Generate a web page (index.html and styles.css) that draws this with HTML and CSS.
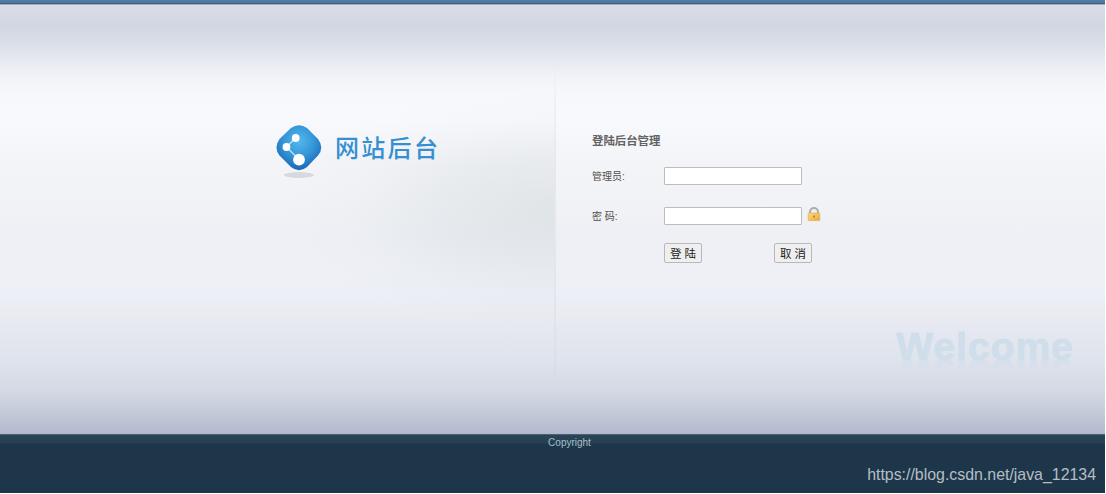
FILE: index.html
```html
<!DOCTYPE html>
<html lang="zh-CN">
<head>
    <meta charset="utf-8">
    <title>网站后台</title>
    <link rel="stylesheet" href="styles.css">
</head>
<body>
    <div class="top-bar"></div>

    <div class="main">
        <div class="left">
            <div class="logo">
                <svg class="logo-icon" width="48" height="56" viewBox="0 0 48 56">
                    <defs>
                        <radialGradient id="blue" cx="50%" cy="35%" r="62%">
                            <stop offset="0" stop-color="#55b8ec"/>
                            <stop offset="0.55" stop-color="#3596d8"/>
                            <stop offset="1" stop-color="#1c6cb8"/>
                        </radialGradient>
                    </defs>
                    <ellipse class="logo-shadow" cx="24" cy="51" rx="15" ry="3"/>
                    <path d="M16 4 Q24 -1.500 32 4 L43 15 Q49.500 23.500 43 31.500 L32 43 Q24 49.500 16 43 L4.500 31.500 Q-1.500 23.500 4.500 15 Z" fill="url(#blue)"/>
                    <path d="M20.500 14 L11.500 23 L24 35.500" fill="none" stroke="#b9dff5" stroke-width="1.500"/>
                    <circle cx="20.700" cy="14" r="3.900" fill="#fff"/>
                    <circle cx="11.500" cy="23" r="3.900" fill="#fff"/>
                    <circle cx="24" cy="35.700" r="5.900" fill="#fff"/>
                </svg>
                <span class="logo-text">网站后台</span>
            </div>
        </div>
        <div class="divider"></div>
        <div class="right">
            <form class="login">
                <h2>登陆后台管理</h2>
                <div class="row">
                    <label for="username">管理员:</label>
                    <input type="text" id="username">
                </div>
                <div class="row">
                    <label for="password">密 码:</label>
                    <input type="password" id="password">
                    <svg class="lock" width="14" height="16" viewBox="0 0 14 16">
                        <defs>
                            <linearGradient id="gold" x1="0" y1="0" x2="1" y2="1">
                                <stop offset="0" stop-color="#fbdc84"/>
                                <stop offset="1" stop-color="#e9a83b"/>
                            </linearGradient>
                        </defs>
                        <path d="M3 8 V6 A4 4 0 0 1 11 6 V8" fill="none" stroke="#a9abad" stroke-width="2"/>
                        <rect x="1.200" y="7" width="11.600" height="7.600" rx="0.800" fill="url(#gold)" stroke="#e3ad51" stroke-width="0.700"/>
                        <rect x="6.300" y="9.500" width="1.400" height="2" fill="#a77421"/>
                    </svg>
                </div>
                <div class="buttons">
                    <button type="button">登 陆</button>
                    <button type="reset">取 消</button>
                </div>
            </form>
            <div class="welcome">Welcome</div>
        </div>
    </div>

    <div class="footer">
        <div class="copyright">Copyright</div>
        <div class="link">https://blog.csdn.net/java_12134</div>
    </div>
</body>
</html>
```

FILE: styles.css
```css
* { box-sizing: border-box; }
html { background: #fff; }
body { margin: 0; width: 1105px; height: 493px; display: flex; flex-direction: column; overflow: hidden; font-family: "Liberation Sans", "Noto Sans CJK SC", sans-serif; background: #1e364a; }

.top-bar { height: 5px; flex: none; background: linear-gradient(#557da3 0, #50769b 3px, #3b5f7e 3px, #3b5f7e 4px, #a0aec0 4px); }

.main {
    height: 429px;
    flex: none;
    display: flex;
    background: linear-gradient(#d9dde7 0, #d2d6e2 20px, #dadee8 38px, #e6e9f0 55px, #f2f4f8 74px, #f7f8fc 90px, #f8f9fd 115px, #f3f4f7 160px, #f2f3f6 190px, #eef0f5 230px, #eef0f5 270px, #ebeff8 290px, #ebecf2 305px, #e5e8f1 325px, #dfe3ec 355px, #d5d9e5 385px, #c3cad7 408px, #b2b9cd 429px);
}
.left {
    width: 554px;
    padding: 119px 0 0 275px;
    background: radial-gradient(ellipse 270px 120px at 554px 205px, rgba(196, 206, 209, 0.38), rgba(205, 213, 216, 0.26) 45%, rgba(215, 222, 226, 0.1) 75%, rgba(220, 226, 230, 0) 100%);
}
.logo { display: flex; }
.logo-icon { display: block; }
.logo-shadow { fill: #d7d9de; }
.logo-text { margin: 5px 0 0 12px; font-family: "Noto Sans CJK SC", sans-serif; font-size: 24px; font-weight: 500; line-height: 36px; letter-spacing: 2.3px; color: #368fd0; }

.divider { width: 2px; margin: 45px 0 60px; background: linear-gradient(rgba(226, 229, 235, 0), #e6e8ed 35%, #e3e6ed 70%, rgba(210, 215, 225, 0.5)); }

.right { flex: 1; padding: 127px 31px 0 36px; }
.login { margin: 0; }
.login h2 { margin: 0; font-size: 11.4px; line-height: 18px; color: #626262; }
.row { display: flex; align-items: center; height: 18px; margin-top: 17px; }
.row + .row { margin-top: 22px; }
.row label { width: 72px; padding-top: 2px; font-size: 10px; line-height: 18px; color: #4e4e4e; }
.row input { width: 138px; height: 18px; padding: 0 3px; border: 1px solid #bdbdbd; border-radius: 1px; background: #fff; }
.lock { margin: -5px 0 0 5px; }
.buttons { display: flex; gap: 72px; margin: 18px 0 0 72px; }
.buttons button { width: 38px; height: 20px; padding: 1px 0 0; border: 1px solid #b9b9b9; border-radius: 2px; background: #efefef; font-family: "Liberation Sans", "Noto Sans CJK SC", sans-serif; font-size: 11.5px; line-height: 18px; color: #222; white-space: nowrap; }

.welcome {
    margin-top: 65px;
    height: 32px;
    font-size: 39px;
    font-weight: bold;
    line-height: 37px;
    letter-spacing: 1px;
    text-align: right;
    color: #d0deeb;
    -webkit-text-stroke: 1.2px #d0deeb;
    -webkit-box-reflect: below -1px linear-gradient(transparent 60%, rgba(0, 0, 0, 0.7));
}

.footer { flex: 1; border-top: 1px solid #496173; background: linear-gradient(#2b4558, #263f52 8px, #1e364a 9px); }
.copyright { padding-left: 34px; font-size: 10px; line-height: 15px; text-align: center; color: #a2c0ca; }
.link { padding: 15px 9px 0 0; font-size: 15.9px; line-height: 20px; text-align: right; color: #b5bec5; }
```
